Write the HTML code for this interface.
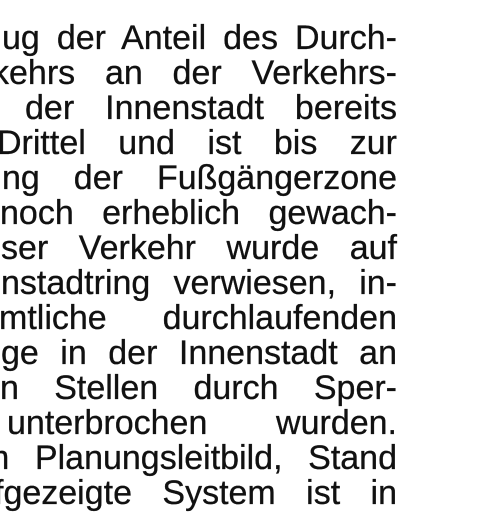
<!DOCTYPE html>
<html><head><meta charset="utf-8"><style>
html,body{margin:0;padding:0;background:#fff;}
body{width:477px;height:512px;overflow:hidden;position:relative;}
.l{position:absolute;right:80px;height:35px;line-height:35px;font-family:"Liberation Sans",sans-serif;font-size:34px;color:#111;text-align:justify;text-align-last:justify;white-space:nowrap;-webkit-text-stroke:0.3px #111;}
.l span{display:block;white-space:normal;}
</style></head><body>
<div class="l" style="top:21px;left:2px"><span>ug der Anteil des Durch-</span></div>
<div class="l" style="top:56px;left:-8px"><span>kehrs an der Verkehrs-</span></div>
<div class="l" style="top:91px;left:25px"><span>der Innenstadt bereits</span></div>
<div class="l" style="top:126px;left:-3px"><span>Drittel und ist bis zur</span></div>
<div class="l" style="top:161px;left:2px"><span>ng der Fußgängerzone</span></div>
<div class="l" style="top:196px;left:0px"><span>noch erheblich gewach-</span></div>
<div class="l" style="top:231px;left:1px"><span>ser Verkehr wurde auf</span></div>
<div class="l" style="top:266px;left:1px"><span>nstadtring verwiesen, in-</span></div>
<div class="l" style="top:301px;left:-1px"><span>mtliche durchlaufenden</span></div>
<div class="l" style="top:336px;left:1px"><span>ge in der Innenstadt an</span></div>
<div class="l" style="top:371px;left:0px"><span>n Stellen durch Sper-</span></div>
<div class="l" style="top:406px;left:7px"><span>unterbrochen wurden.</span></div>
<div class="l" style="top:441px;left:-19px"><span>m Planungsleitbild, Stand</span></div>
<div class="l" style="top:476px;left:-6px"><span>fgezeigte System ist in</span></div>
</body></html>
